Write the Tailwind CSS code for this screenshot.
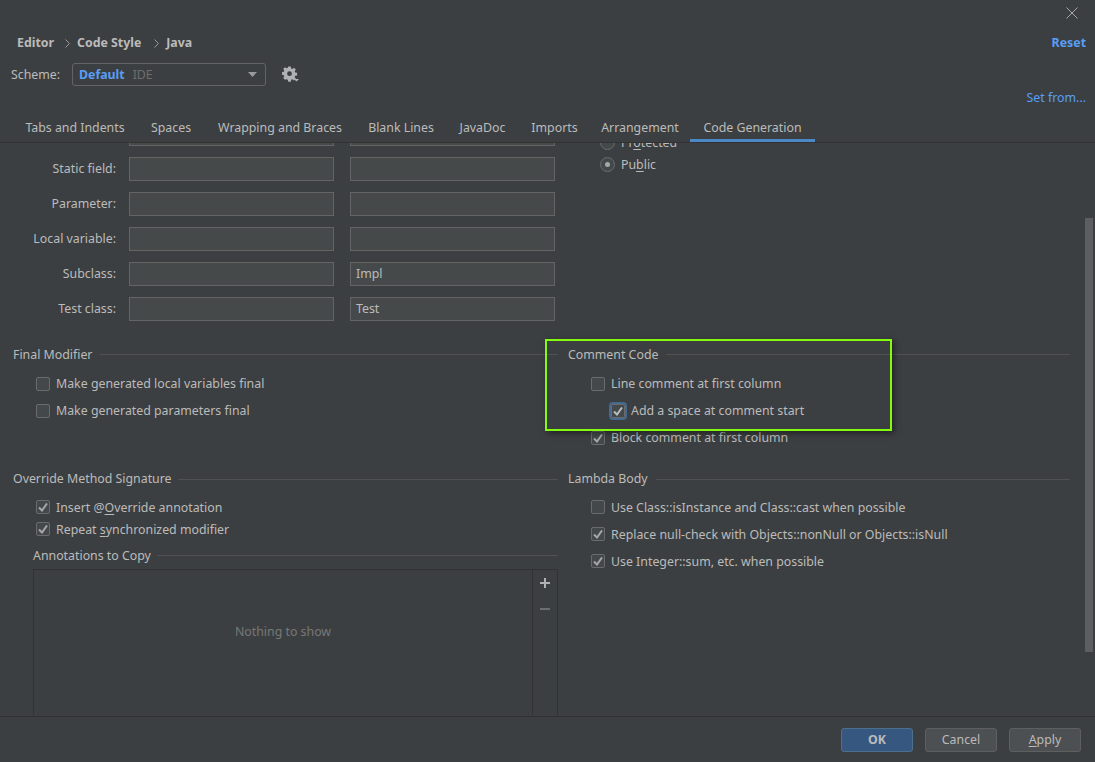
<!DOCTYPE html>
<html lang="en">
<head>
  <meta charset="UTF-8">
  <title>Code Style - Java</title>
  <script src="https://cdn.jsdelivr.net/npm/@tailwindcss/browser@4"></script>
</head>
<body class="bg-[#3c3f41]">
  <div class="relative w-[1095px] h-[762px] overflow-hidden flex flex-col bg-[#3c3f41] text-[#bbbbbb] text-[12.35px] leading-[18px] font-['Noto_Sans','Open_Sans',sans-serif]">

    <!-- header -->
    <header class="h-[143px] shrink-0 flex flex-col border-b border-[#323232]">
      <div class="h-[24px] flex justify-end pr-[17px] pt-[7px]">
        <svg width="12" height="12" viewBox="0 0 12 12" fill="none" stroke="#a8a8a8" stroke-width="1"><path d="M0.5 0.5l11 11M11.5 0.5l-11 11"/></svg>
      </div>
      <div class="h-[36px] flex items-center pl-[17px] pr-[9px] pt-[2px] font-bold">
        <span>Editor</span>
        <svg class="ml-[11px] mr-[7px]" width="5" height="9" viewBox="0 0 5 9" fill="none" stroke="#999" stroke-width="1"><path d="M0.5 0.5l4 4-4 4"/></svg>
        <span>Code Style</span>
        <svg class="ml-[13px] mr-[7px]" width="5" height="9" viewBox="0 0 5 9" fill="none" stroke="#999" stroke-width="1"><path d="M0.5 0.5l4 4-4 4"/></svg>
        <span>Java</span>
        <span class="ml-auto text-[#589df6]">Reset</span>
      </div>
      <div class="h-[24px] mt-[2px] flex items-center pl-[11px]">
        <span class="w-[61px] pt-[2px]">Scheme:</span>
        <div class="w-[194px] h-[23px] flex items-center pl-[6px] pr-[8px] border border-[#646464] rounded-[3px]">
          <span class="pt-[2px] font-bold text-[#589df6]">Default</span>
          <span class="pt-[2px] ml-[8px] text-[#6e6e6e]">IDE</span>
          <svg class="ml-auto" width="9" height="5" viewBox="0 0 9 5" fill="#9a9a9a"><path d="M0 0h9L4.5 5z"/></svg>
        </div>
        <svg class="ml-[16px]" width="17" height="16" viewBox="0 0 17 16">
          <path fill="#afb1b3" fill-rule="evenodd" d="M6.2 0.5h2.6l.4 1.9 1.2.5 1.6-1.1 1.8 1.8-1.1 1.6.5 1.2 1.9.4v2.6l-1.9.4-.5 1.2 1.1 1.6-1.8 1.8-1.6-1.1-1.2.5-.4 1.9H6.2l-.4-1.9-1.2-.5L3 13.8 1.2 12l1.1-1.6-.5-1.2-1.9-.4V6.2l1.9-.4.5-1.2L1.2 3 3 1.2l1.6 1.1 1.2-.5zM7.5 5.3a2.4 2.4 0 1 0 0 4.8 2.4 2.4 0 0 0 0-4.8z"/>
          <path fill="#afb1b3" d="M12 13h5l-2.5 2.5z"/>
        </svg>
      </div>
      <div class="h-[20px] mt-[2px] flex items-center justify-end pr-[9px] text-[#589df6]">Set from...</div>
      <nav class="flex-1 flex items-end pl-[12px] text-center">
        <span class="w-[126px] h-[27px] pt-[4px]">Tabs and Indents</span>
        <span class="w-[66px] h-[27px] pt-[4px]">Spaces</span>
        <span class="w-[152px] h-[27px] pt-[4px]">Wrapping and Braces</span>
        <span class="w-[90px] h-[27px] pt-[4px]">Blank Lines</span>
        <span class="w-[73px] h-[27px] pt-[4px]">JavaDoc</span>
        <span class="w-[71px] h-[27px] pt-[4px]">Imports</span>
        <span class="w-[100px] h-[27px] pt-[4px]">Arrangement</span>
        <span class="w-[125px] h-[27px] pt-[4px] border-b-[3px] border-[#4a88c7]">Code Generation</span>
      </nav>
    </header>

    <!-- settings body -->
    <main class="flex-1 min-h-0 overflow-hidden flex pl-[13px] pr-[25px]">
      <div class="w-[545px] shrink-0 flex flex-col">
        <!-- naming fields -->
        <div class="-mt-[21px] flex flex-col gap-[11px]">
          <div class="flex items-center h-[24px] pl-[116px] gap-[16px]">
            <div class="w-[205px] h-[24px] border border-[#646464] bg-[#45494a]"></div>
            <div class="w-[205px] h-[24px] border border-[#646464] bg-[#45494a]"></div>
          </div>
          <div class="flex items-center h-[24px]">
            <span class="w-[103px] text-right">Static field:</span>
            <div class="ml-[13px] w-[205px] h-[24px] border border-[#646464] bg-[#45494a]"></div>
            <div class="ml-[16px] w-[205px] h-[24px] border border-[#646464] bg-[#45494a]"></div>
          </div>
          <div class="flex items-center h-[24px]">
            <span class="w-[103px] text-right">Parameter:</span>
            <div class="ml-[13px] w-[205px] h-[24px] border border-[#646464] bg-[#45494a]"></div>
            <div class="ml-[16px] w-[205px] h-[24px] border border-[#646464] bg-[#45494a]"></div>
          </div>
          <div class="flex items-center h-[24px]">
            <span class="w-[103px] text-right">Local variable:</span>
            <div class="ml-[13px] w-[205px] h-[24px] border border-[#646464] bg-[#45494a]"></div>
            <div class="ml-[16px] w-[205px] h-[24px] border border-[#646464] bg-[#45494a]"></div>
          </div>
          <div class="flex items-center h-[24px]">
            <span class="w-[103px] text-right">Subclass:</span>
            <div class="ml-[13px] w-[205px] h-[24px] border border-[#646464] bg-[#45494a]"></div>
            <div class="ml-[16px] w-[205px] h-[24px] border border-[#646464] bg-[#45494a] pl-[5px] leading-[22px]">Impl</div>
          </div>
          <div class="flex items-center h-[24px]">
            <span class="w-[103px] text-right">Test class:</span>
            <div class="ml-[13px] w-[205px] h-[24px] border border-[#646464] bg-[#45494a]"></div>
            <div class="ml-[16px] w-[205px] h-[24px] border border-[#646464] bg-[#45494a] pl-[5px] leading-[22px]">Test</div>
          </div>
        </div>

        <!-- final modifier -->
        <div class="mt-[24px] h-[18px] flex items-center gap-[8px]">
          <span class="pt-[2px]">Final Modifier</span><div class="flex-1 h-px bg-[#515151]"></div>
        </div>
        <div class="mt-[13px] ml-[23px] h-[16px] flex items-center gap-[6px]">
          <div class="w-[14px] h-[14px] rounded-[2px] border border-[#6b6b6b] bg-[#43494a]"></div>
          <span>Make generated local variables final</span>
        </div>
        <div class="mt-[11px] ml-[23px] h-[16px] flex items-center gap-[6px]">
          <div class="w-[14px] h-[14px] rounded-[2px] border border-[#6b6b6b] bg-[#43494a]"></div>
          <span>Make generated parameters final</span>
        </div>

        <!-- override method signature -->
        <div class="mt-[51px] h-[18px] flex items-center gap-[6px]">
          <span>Override Method Signature</span><div class="flex-1 h-px bg-[#515151]"></div>
        </div>
        <div class="mt-[11px] ml-[23px] h-[16px] flex items-center gap-[6px]">
          <div class="w-[14px] h-[14px] rounded-[2px] border border-[#6b6b6b] bg-[#43494a] flex items-center justify-center">
            <svg width="10" height="9" viewBox="0 0 10 9" fill="none" stroke="#a7a7a7" stroke-width="2"><path d="M1 4.5l3 3 5-7"/></svg>
          </div>
          <span class="pt-[2px]">Insert @<u class="underline-offset-2">O</u>verride annotation</span>
        </div>
        <div class="mt-[6px] ml-[23px] h-[16px] flex items-center gap-[6px]">
          <div class="w-[14px] h-[14px] rounded-[2px] border border-[#6b6b6b] bg-[#43494a] flex items-center justify-center">
            <svg width="10" height="9" viewBox="0 0 10 9" fill="none" stroke="#a7a7a7" stroke-width="2"><path d="M1 4.5l3 3 5-7"/></svg>
          </div>
          <span class="pt-[2px]">Repeat <u class="underline-offset-2">s</u>ynchronized modifier</span>
        </div>
        <div class="mt-[9px] ml-[20px] h-[18px] flex items-center gap-[6px]">
          <span class="pt-[2px]">Annotations to Copy</span><div class="flex-1 h-px bg-[#515151]"></div>
        </div>
        <div class="mt-[5px] ml-[20px] h-[146px] flex border border-b-0 border-[#323232]">
          <div class="flex-1 flex items-center justify-center pb-[22px] text-[#777777]">Nothing to show</div>
          <div class="w-[25px] border-l border-[#323232] flex flex-col items-center pt-[8px] gap-[16px]">
            <svg width="10" height="10" viewBox="0 0 10 10" fill="#afb1b3"><path d="M4 0h2v4h4v2H6v4H4V6H0V4h4z"/></svg>
            <svg width="10" height="10" viewBox="0 0 10 10" fill="#6b6e70"><path d="M0 4h10v2H0z"/></svg>
          </div>
        </div>
      </div>

      <div class="ml-[10px] flex-1 flex flex-col">
        <!-- visibility radios -->
        <div class="-mt-[10px] ml-[32px] h-[18px] flex items-center gap-[6px]">
          <div class="w-[15px] h-[15px] rounded-full border border-[#6b6b6b] bg-[#43494a]"></div>
          <span class="pt-[2px]">Pr<u class="underline-offset-2">o</u>tected</span>
        </div>
        <div class="mt-[4px] ml-[32px] h-[18px] flex items-center gap-[6px]">
          <div class="w-[15px] h-[15px] rounded-full border border-[#6b6b6b] bg-[#43494a] flex items-center justify-center">
            <div class="w-[5px] h-[5px] rounded-full bg-[#a7a7a7]"></div>
          </div>
          <span class="pt-[2px]">Pu<u class="underline-offset-2">b</u>lic</span>
        </div>

        <!-- comment code -->
        <div class="mt-[172px] h-[18px] flex items-center gap-[8px]">
          <span class="pt-[2px]">Comment Code</span><div class="flex-1 h-px bg-[#515151]"></div>
        </div>
        <div class="mt-[13px] ml-[23px] h-[16px] flex items-center gap-[6px]">
          <div class="w-[14px] h-[14px] rounded-[2px] border border-[#6b6b6b] bg-[#43494a]"></div>
          <span>Line comment at first column</span>
        </div>
        <div class="mt-[11px] ml-[43px] h-[16px] flex items-center gap-[6px]">
          <div class="w-[14px] h-[14px] rounded-[2px] border border-[#6b6b6b] bg-[#43494a] outline-2 outline-[#46698f] flex items-center justify-center">
            <svg width="10" height="9" viewBox="0 0 10 9" fill="none" stroke="#bcbcbc" stroke-width="2"><path d="M1 4.5l3 3 5-7"/></svg>
          </div>
          <span>Add a space at comment start</span>
        </div>
        <div class="mt-[11px] ml-[23px] h-[16px] flex items-center gap-[6px]">
          <div class="w-[14px] h-[14px] rounded-[2px] border border-[#6b6b6b] bg-[#43494a] flex items-center justify-center">
            <svg width="10" height="9" viewBox="0 0 10 9" fill="none" stroke="#a7a7a7" stroke-width="2"><path d="M1 4.5l3 3 5-7"/></svg>
          </div>
          <span>Block comment at first column</span>
        </div>

        <!-- lambda body -->
        <div class="mt-[24px] h-[18px] flex items-center gap-[8px]">
          <span>Lambda Body</span><div class="flex-1 h-px bg-[#515151]"></div>
        </div>
        <div class="mt-[11px] ml-[23px] h-[16px] flex items-center gap-[6px]">
          <div class="w-[14px] h-[14px] rounded-[2px] border border-[#6b6b6b] bg-[#43494a]"></div>
          <span class="pt-[2px]">Use Class::isInstance and Class::cast when possible</span>
        </div>
        <div class="mt-[11px] ml-[23px] h-[16px] flex items-center gap-[6px]">
          <div class="w-[14px] h-[14px] rounded-[2px] border border-[#6b6b6b] bg-[#43494a] flex items-center justify-center">
            <svg width="10" height="9" viewBox="0 0 10 9" fill="none" stroke="#a7a7a7" stroke-width="2"><path d="M1 4.5l3 3 5-7"/></svg>
          </div>
          <span class="pt-[2px]">Replace null-check with Objects::nonNull or Objects::isNull</span>
        </div>
        <div class="mt-[11px] ml-[23px] h-[16px] flex items-center gap-[6px]">
          <div class="w-[14px] h-[14px] rounded-[2px] border border-[#6b6b6b] bg-[#43494a] flex items-center justify-center">
            <svg width="10" height="9" viewBox="0 0 10 9" fill="none" stroke="#a7a7a7" stroke-width="2"><path d="M1 4.5l3 3 5-7"/></svg>
          </div>
          <span class="pt-[2px]">Use Integer::sum, etc. when possible</span>
        </div>
      </div>
    </main>

    <!-- footer -->
    <footer class="h-[46px] shrink-0 border-t border-[#323232] flex items-center justify-end gap-[12px] pr-[14px] pt-[1px]">
      <div class="w-[72px] h-[24px] rounded-[3px] border border-[#4c708c] bg-[#365880] font-bold flex items-center justify-center">OK</div>
      <div class="w-[72px] h-[24px] rounded-[3px] border border-[#5e6060] bg-[#4c5052] flex items-center justify-center">Cancel</div>
      <div class="w-[72px] h-[24px] rounded-[3px] border border-[#5e6060] bg-[#4c5052] flex items-center justify-center"><span><u class="underline-offset-2">A</u>pply</span></div>
    </footer>

    <!-- scrollbar thumb, over the content -->
    <div class="absolute left-[1085px] top-[218px] w-[8px] h-[434px] bg-[#5c5e5f]"></div>
    <!-- green annotation drawn over the screenshot -->
    <div class="absolute left-[545px] top-[339px] w-[347px] h-[92px] border-[2px] border-[#84fb0e] shadow-[2px_2px_6px_rgba(0,0,0,0.5)]"></div>
  </div>
</body>
</html>
